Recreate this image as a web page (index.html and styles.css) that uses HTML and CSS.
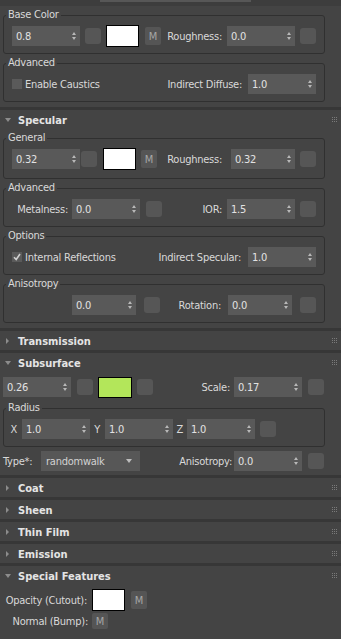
FILE: index.html
```html
<!DOCTYPE html>
<html lang="en">
<head>
    <meta charset="UTF-8">
    <meta name="viewport" content="width=device-width, initial-scale=1.0">
    <title>Standard Surface - Parameters</title>
    <link rel="stylesheet" href="styles.css">
</head>
<body>
<div class="panel">
    <div class="top-strip"><div class="top-field"></div></div>

    <!-- Base -->
    <div class="rollout">
        <div class="body">
            <fieldset class="group">
                <legend>Base Color</legend>
                <div class="row r-base">
                    <div class="spin">0.8<i class="arr"></i></div>
                    <div class="sq"></div>
                    <div class="swatch"></div>
                    <div class="mbtn">M</div>
                    <span class="lbl">Roughness:</span>
                    <div class="spin">0.0<i class="arr"></i></div>
                    <div class="sq"></div>
                </div>
            </fieldset>
            <fieldset class="group">
                <legend>Advanced</legend>
                <div class="row r-check">
                    <label class="check"><span class="cb"></span>Enable Caustics</label>
                    <span class="lbl">Indirect Diffuse:</span>
                    <div class="spin">1.0<i class="arr"></i></div>
                </div>
            </fieldset>
        </div>
    </div>

    <!-- Specular -->
    <div class="rollout">
        <div class="head open">Specular<span class="grip"></span></div>
        <div class="body">
            <fieldset class="group tall">
                <legend>General</legend>
                <div class="row r-general">
                    <div class="spin">0.32<i class="arr"></i></div>
                    <div class="sq"></div>
                    <div class="swatch"></div>
                    <div class="mbtn">M</div>
                    <span class="lbl">Roughness:</span>
                    <div class="spin narrow">0.32<i class="arr"></i></div>
                    <div class="sq"></div>
                </div>
            </fieldset>
            <fieldset class="group">
                <legend>Advanced</legend>
                <div class="row r-specadv">
                    <span class="lbl">Metalness:</span>
                    <div class="spin">0.0<i class="arr"></i></div>
                    <div class="sq"></div>
                    <span class="lbl">IOR:</span>
                    <div class="spin">1.5<i class="arr"></i></div>
                    <div class="sq"></div>
                </div>
            </fieldset>
            <fieldset class="group">
                <legend>Options</legend>
                <div class="row r-options">
                    <label class="check"><span class="cb on"><svg width="8" height="8" viewBox="0 0 8 8"><path d="M1 4.2 L3.2 6.5 L7 1" fill="none" stroke="#d0d0d0" stroke-width="1.6"/></svg></span>Internal Reflections</label>
                    <span class="lbl">Indirect Specular:</span>
                    <div class="spin">1.0<i class="arr"></i></div>
                </div>
            </fieldset>
            <fieldset class="group">
                <legend>Anisotropy</legend>
                <div class="row r-aniso">
                    <div class="spin narrow">0.0<i class="arr"></i></div>
                    <div class="sq"></div>
                    <span class="lbl">Rotation:</span>
                    <div class="spin narrow">0.0<i class="arr"></i></div>
                    <div class="sq"></div>
                </div>
            </fieldset>
        </div>
    </div>

    <div class="rollout">
        <div class="head">Transmission<span class="grip"></span></div>
    </div>

    <!-- Subsurface -->
    <div class="rollout">
        <div class="head open">Subsurface<span class="grip"></span></div>
        <div class="body sss-body">
            <div class="row r-sss">
                <div class="spin">0.26<i class="arr"></i></div>
                <div class="sq"></div>
                <div class="swatch green"></div>
                <div class="sq"></div>
                <span class="lbl">Scale:</span>
                <div class="spin">0.17<i class="arr"></i></div>
                <div class="sq"></div>
            </div>
            <fieldset class="group radius">
                <legend>Radius</legend>
                <div class="row r-radius">
                    <span class="lbl">X</span>
                    <div class="spin">1.0<i class="arr"></i></div>
                    <span class="lbl">Y</span>
                    <div class="spin">1.0<i class="arr"></i></div>
                    <span class="lbl">Z</span>
                    <div class="spin">1.0<i class="arr"></i></div>
                    <div class="sq"></div>
                </div>
            </fieldset>
            <div class="row r-type">
                <span class="lbl left">Type*:</span>
                <div class="drop">randomwalk<i class="down"></i></div>
                <span class="lbl">Anisotropy:</span>
                <div class="spin">0.0<i class="arr"></i></div>
                <div class="sq"></div>
            </div>
        </div>
    </div>

    <div class="rollout">
        <div class="head">Coat<span class="grip"></span></div>
    </div>
    <div class="rollout">
        <div class="head">Sheen<span class="grip"></span></div>
    </div>
    <div class="rollout">
        <div class="head">Thin Film<span class="grip"></span></div>
    </div>
    <div class="rollout">
        <div class="head">Emission<span class="grip"></span></div>
    </div>

    <!-- Special Features -->
    <div class="rollout last">
        <div class="head open">Special Features<span class="grip"></span></div>
        <div class="body special-body">
            <div class="row r-opacity">
                <span class="lbl">Opacity (Cutout):</span>
                <div class="swatch"></div>
                <div class="mbtn">M</div>
            </div>
            <div class="row r-normal">
                <span class="lbl">Normal (Bump):</span>
                <div class="mbtn small">M</div>
            </div>
        </div>
    </div>
</div>
</body>
</html>
```

FILE: styles.css
```css
*{
    box-sizing: border-box;
}
body{
    margin: 0;
    background-color: #373737;
    font-family: "DejaVu Sans Condensed", "DejaVu Sans", sans-serif;
    font-size: 11px;
    letter-spacing: -0.25px;
    color: #d9d9d9;
}
.panel{
    width: 341px;
    height: 639px;
    overflow: hidden;
    display: flex;
    flex-direction: column;
}
.top-strip{
    height: 6px;
    background-color: #3d3d3d;
    padding-left: 100px;
}
.top-field{
    width: 151px;
    height: 2px;
    background-color: #575757;
}
.rollout{
    background-color: #444444;
    flex-shrink: 0;
}
.rollout + .rollout{
    margin-top: 3px;
}
.rollout.last{
    flex-grow: 1;
}

/* rollout titles */
.head{
    height: 19px;
    display: flex;
    align-items: center;
    padding-left: 6px;
    padding-top: 1px;
    font-weight: bold;
    letter-spacing: 0;
    color: #e4e4e4;
}
.head::before{
    content: "";
    border-top: 3px solid transparent;
    border-bottom: 3px solid transparent;
    border-left: 3px solid #8c8c8c;
    margin-right: 9px;
}
.head.open::before{
    border-left: 3px solid transparent;
    border-right: 3px solid transparent;
    border-top: 4px solid #8c8c8c;
    border-bottom: 0;
    margin-left: -1px;
    margin-right: 7px;
}
.grip{
    width: 1px;
    height: 1px;
    margin-left: auto;
    margin-right: 8px;
    align-self: flex-start;
    margin-top: 6px;
    background-color: #7a7a7a;
    box-shadow: 2px 0 #7a7a7a, 4px 0 #7a7a7a,
                0 2px #7a7a7a, 2px 2px #7a7a7a, 4px 2px #7a7a7a,
                0 4px #7a7a7a, 2px 4px #7a7a7a, 4px 4px #7a7a7a;
}

.body{
    padding-bottom: 5px;
}

/* group boxes */
.group{
    margin: 3px 16px 0 3px;
    padding: 0 0 6px;
    border: 1px solid #303030;
    border-radius: 3px;
    min-width: 0;
}
.group.tall{
    padding-bottom: 8px;
}
.group legend{
    margin-left: 2px;
    padding: 0 2px;
    line-height: 12px;
}

.row{
    display: grid;
    align-items: center;
    justify-items: end;
    height: 22px;
    margin-top: 4px;
    padding: 0 8px;
}
.lbl{
    white-space: nowrap;
}
.lbl.left{
    justify-self: start;
}

.r-base{ grid-template-columns: 68px 21px 38px 22px 61px 73px 21px; }
.r-check{ grid-template-columns: 150px 80px 74px; }
.r-options{ grid-template-columns: 150px 79px 75px; }
.r-general{ grid-template-columns: 68px 17px 39px 21px 65px 73px 21px; }
.r-specadv{ grid-template-columns: 56px 72px 22px 60px 73px 21px; }
.r-aniso{ grid-template-columns: 124px 24px 61px 71px 24px; }

.sss-body{
    padding: 4px 0 3px;
}
.sss-body > .row{
    margin: 0 17px 0 3px;
    padding: 0;
}
.r-sss{ grid-template-columns: 68px 22px 39px 21px 77px 72px 22px; }
.group.radius{
    margin-top: 4px;
}
.group.radius .row{
    padding: 0;
}
.r-radius{ grid-template-columns: 13px 73px 10px 73px 10px 72px 21px; }
.sss-body > .r-type{
    margin-top: 3px;
}
.r-type{ grid-template-columns: 37px 100px 92px 70px 22px; }

.special-body{
    padding-top: 4px;
}
.special-body .row{
    margin: 0 0 0 3px;
    padding: 0;
}
.special-body .r-normal{
    height: 20px;
}
.r-opacity{ grid-template-columns: 84px 38px 22px; }
.r-normal{ grid-template-columns: 85px 20px; }

/* controls */
.spin{
    width: 68px;
    height: 20px;
    display: flex;
    align-items: center;
    justify-content: space-between;
    padding: 0 4px 0 4px;
    background-color: #595959;
    color: #e2e2e2;
}
.spin.narrow{
    width: 64px;
}
.arr{
    display: flex;
    flex-direction: column;
    gap: 2px;
}
.arr::before,
.arr::after{
    content: "";
    border-left: 2px solid transparent;
    border-right: 2px solid transparent;
}
.arr::before{
    border-bottom: 3px solid #b8b8b8;
}
.arr::after{
    border-top: 3px solid #b8b8b8;
}
.sq{
    width: 16px;
    height: 16px;
    border-radius: 3px;
    background-color: #565656;
}
.swatch{
    width: 33px;
    height: 22px;
    background-color: white;
    border: 1px solid black;
}
.swatch.green{
    width: 34px;
    height: 21px;
    background-color: #b3e65a;
}
.mbtn{
    width: 16px;
    height: 18px;
    border-radius: 2px;
    background-color: #555555;
    color: #a6a6a6;
    letter-spacing: 0;
    display: flex;
    align-items: center;
    justify-content: center;
}
.mbtn.small{
    height: 16px;
}
.check{
    justify-self: start;
    display: flex;
    align-items: center;
    gap: 3px;
}
.cb{
    width: 10px;
    height: 10px;
    background-color: #5a5a5a;
    display: flex;
    align-items: center;
    justify-content: center;
}
.drop{
    width: 99px;
    height: 20px;
    display: flex;
    align-items: center;
    justify-content: space-between;
    padding: 0 8px 0 5px;
    background-color: #575757;
    color: #d2d2d2;
}
.down{
    border-left: 3px solid transparent;
    border-right: 3px solid transparent;
    border-top: 4px solid #bdbdbd;
}
```
